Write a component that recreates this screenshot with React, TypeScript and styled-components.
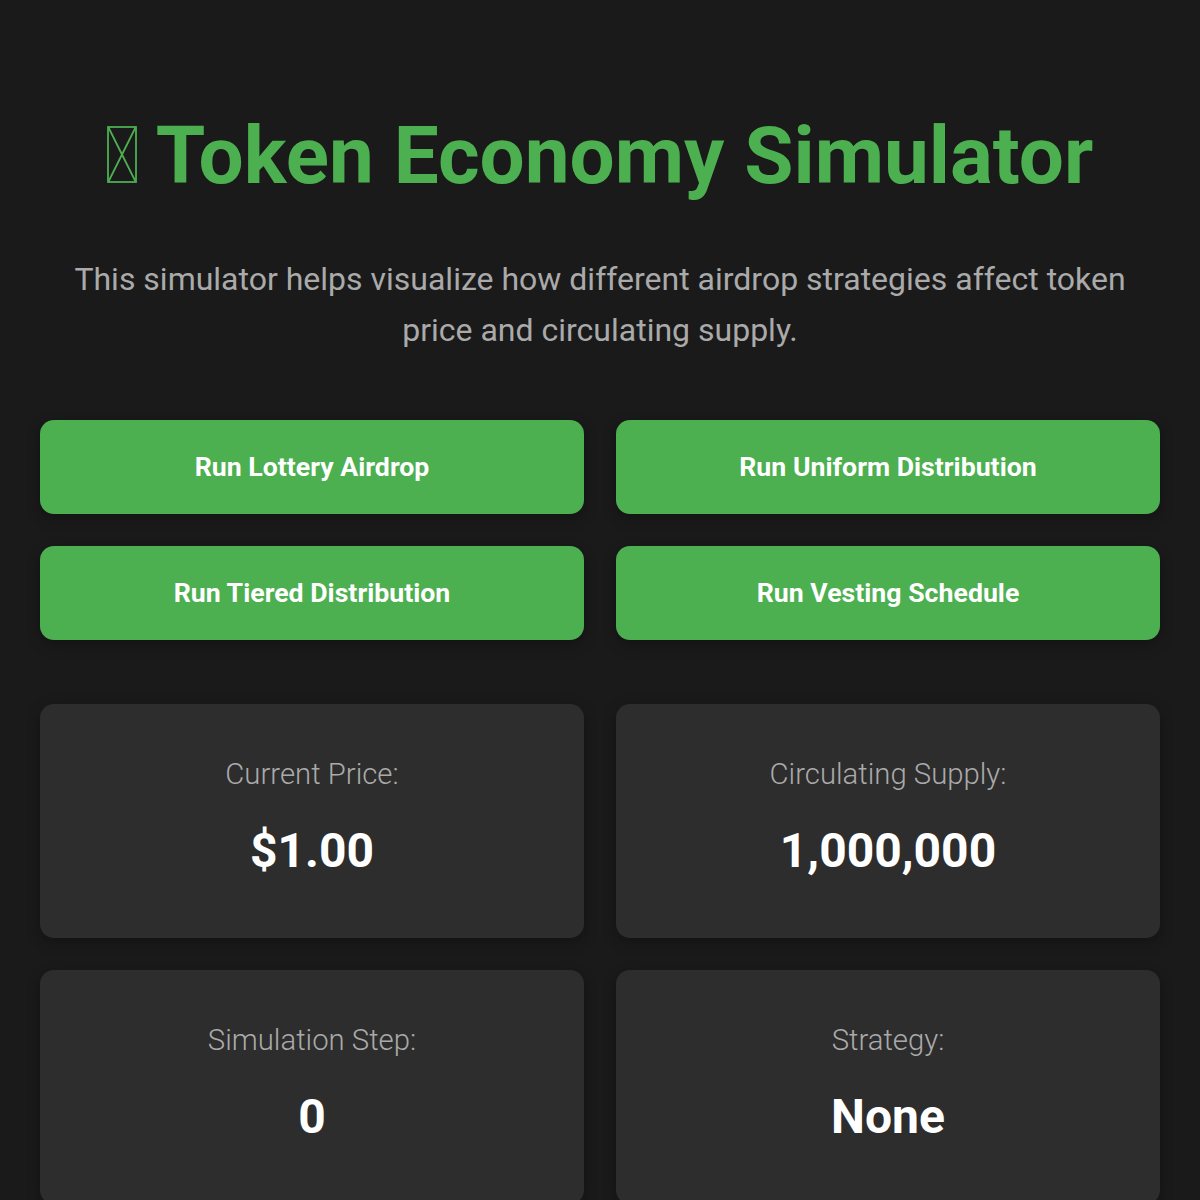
import * as React from "react";
import styled, { createGlobalStyle } from "styled-components";

const GlobalStyle = createGlobalStyle`
  html, body {
    margin: 0;
    padding: 0;
    background: #1a1a1a;
  }
  body {
    font-family: Roboto, "Liberation Sans", sans-serif;
    color: #ffffff;
  }
  * {
    box-sizing: border-box;
  }
`;

const Page = styled.div`
  padding: 40px;
  min-height: 100vh;
`;

const Title = styled.h1`
  margin: 69px 0 51px;
  text-align: center;
  font-size: 80px;
  font-weight: 700;
  line-height: 94px;
  color: #4caf50;
`;

// the title emoji has no glyph in the page font, so it shows as an empty box
const MissingGlyph = styled.svg`
  display: inline-block;
  width: 30px;
  height: 57px;
  margin-right: 19px;
  vertical-align: baseline;
`;

const Intro = styled.p`
  margin: 0 auto 64px;
  max-width: 1080px;
  text-align: center;
  font-size: 32px;
  line-height: 1.6;
  color: #aaaaaa;
`;

const ButtonGrid = styled.div`
  display: grid;
  grid-template-columns: 1fr 1fr;
  gap: 32px;
  margin-bottom: 64px;
`;

const ActionButton = styled.button`
  height: 94px;
  border: none;
  border-radius: 14px;
  background: #4caf50;
  color: #ffffff;
  font-family: Roboto, "Liberation Sans", sans-serif;
  font-size: 26.7px;
  font-weight: 700;
  cursor: pointer;
  box-shadow: 0 4px 14px rgba(0, 0, 0, 0.3);
`;

const StatsGrid = styled.div`
  display: grid;
  grid-template-columns: 1fr 1fr;
  gap: 32px;
`;

const StatCard = styled.div`
  height: 234px;
  padding: 52px 20px;
  border-radius: 14px;
  background: #2d2d2d;
  text-align: center;
  box-shadow: 0 4px 14px rgba(0, 0, 0, 0.3);
`;

const StatLabel = styled.div`
  font-size: 29.3px;
  font-weight: 300;
  line-height: 36px;
  color: #aaaaaa;
  margin-bottom: 30px;
`;

const StatValue = styled.div`
  font-size: 48px;
  font-weight: 700;
  line-height: 58px;
  color: #ffffff;
`;

const actions = [
  "Run Lottery Airdrop",
  "Run Uniform Distribution",
  "Run Tiered Distribution",
  "Run Vesting Schedule",
];

const stats = [
  { label: "Current Price:", value: "$1.00" },
  { label: "Circulating Supply:", value: "1,000,000" },
  { label: "Simulation Step:", value: "0" },
  { label: "Strategy:", value: "None" },
];

function App() {
  return (
    <Page>
      <GlobalStyle />
      <Title>
        <MissingGlyph viewBox="0 0 30 57" aria-hidden="true">
          <g fill="none" stroke="#4caf50" strokeWidth="1.8">
            <rect x="1" y="1" width="28" height="55" />
            <path d="M1.5 1.5 L28.5 55.5 M28.5 1.5 L1.5 55.5" />
          </g>
        </MissingGlyph>
        Token Economy Simulator
      </Title>
      <Intro>
        This simulator helps visualize how different airdrop strategies affect
        token price and circulating supply.
      </Intro>
      <ButtonGrid>
        {actions.map((a) => (
          <ActionButton key={a} type="button">
            {a}
          </ActionButton>
        ))}
      </ButtonGrid>
      <StatsGrid>
        {stats.map((s) => (
          <StatCard key={s.label}>
            <StatLabel>{s.label}</StatLabel>
            <StatValue>{s.value}</StatValue>
          </StatCard>
        ))}
      </StatsGrid>
    </Page>
  );
}

export default App;
